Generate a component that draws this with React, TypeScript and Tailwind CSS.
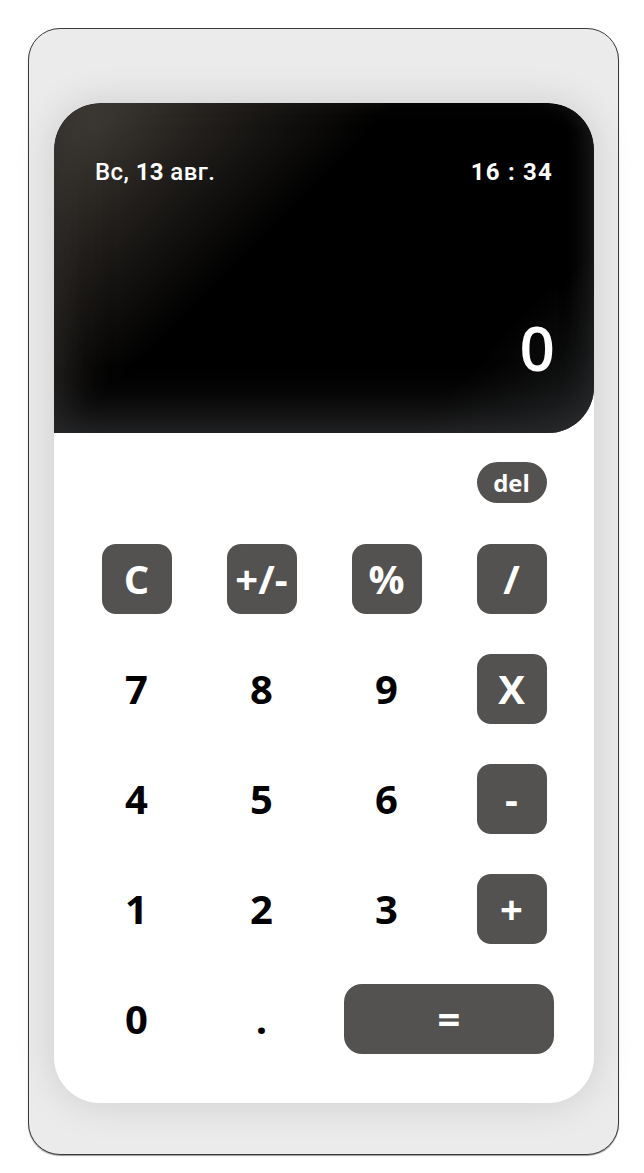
import React from 'react';

type Key = {
    label: string;
    kind: 'op' | 'num';
    wide?: boolean;
};

const keys: Key[] = [
    { label: 'C', kind: 'op' },
    { label: '+/-', kind: 'op' },
    { label: '%', kind: 'op' },
    { label: '/', kind: 'op' },
    { label: '7', kind: 'num' },
    { label: '8', kind: 'num' },
    { label: '9', kind: 'num' },
    { label: 'X', kind: 'op' },
    { label: '4', kind: 'num' },
    { label: '5', kind: 'num' },
    { label: '6', kind: 'num' },
    { label: '-', kind: 'op' },
    { label: '1', kind: 'num' },
    { label: '2', kind: 'num' },
    { label: '3', kind: 'num' },
    { label: '+', kind: 'op' },
    { label: '0', kind: 'num' },
    { label: '.', kind: 'num' },
    { label: '=', kind: 'op', wide: true },
];

function CalcKey({ k }: { k: Key }) {
    if (k.wide) {
        return (
            <div className="col-span-2 flex justify-center">
                <button className="w-[210px] h-[70px] rounded-[18px] bg-[#535250] text-white text-[40px] font-bold leading-none flex items-center justify-center">
                    {k.label}
                </button>
            </div>
        );
    }
    if (k.kind === 'op') {
        return (
            <div className="flex justify-center">
                <button className="w-[70px] h-[70px] rounded-[14px] bg-[#535250] text-white text-[40px] font-bold leading-none flex items-center justify-center">
                    {k.label}
                </button>
            </div>
        );
    }
    return (
        <div className="flex justify-center">
            <button className="w-[70px] h-[70px] text-black text-[40px] font-bold leading-none flex items-center justify-center">
                {k.label}
            </button>
        </div>
    );
}

export default function App() {
    return (
        <div className="min-h-[1173px] bg-white pt-[28px] pl-[28px]" style={{ fontFamily: '"Open Sans", sans-serif' }}>
            <div className="w-[591px] h-[1127px] rounded-[32px] border border-[#3a3a3a] bg-[#ebebec] pt-[74px] pl-[25px] shadow-[0_1px_1px_rgba(0,0,0,0.4)]">
                <div className="w-[540px] h-[1000px] rounded-[46px] bg-white overflow-hidden shadow-[0_0_40px_rgba(0,0,0,0.13)]">
                    {/* display */}
                    <div className="h-[330px] rounded-t-[46px] rounded-br-[46px] bg-[linear-gradient(135deg,#4a4641_0%,#221f1c_20%,#000_40%,#000_78%,#1c1d1e_100%)] px-[41px] pt-[51px] pb-[55px] flex flex-col justify-between shadow-[inset_0_-40px_50px_-25px_#2b2c2e,inset_30px_0_50px_-30px_#2e2b28,inset_-20px_0_30px_-20px_#252627]">
                        <div className="flex justify-between items-center text-white text-[24px] font-medium tracking-[0.4px]" style={{ fontFamily: 'Roboto, sans-serif' }}>
                            <span>Вс, <span className="font-bold">13</span> авг.</span>
                            <span className="font-bold tracking-[1.2px]">16 : 34</span>
                        </div>
                        <div className="text-right text-white text-[62px] font-semibold leading-none mr-[-2px]">0</div>
                    </div>

                    {/* keypad */}
                    <div className="w-[500px] mx-auto pt-[29px]">
                        <div className="grid grid-cols-4">
                            <div className="col-start-4 flex justify-center">
                                <button className="w-[70px] h-[41px] rounded-full bg-[#535250] text-white text-[24px] font-bold leading-none">
                                    del
                                </button>
                            </div>
                        </div>
                        <div className="grid grid-cols-4 gap-y-[40px] mt-[41px]">
                            {keys.map((k) => (
                                <CalcKey key={k.label} k={k} />
                            ))}
                        </div>
                    </div>
                </div>
            </div>
        </div>
    );
}
